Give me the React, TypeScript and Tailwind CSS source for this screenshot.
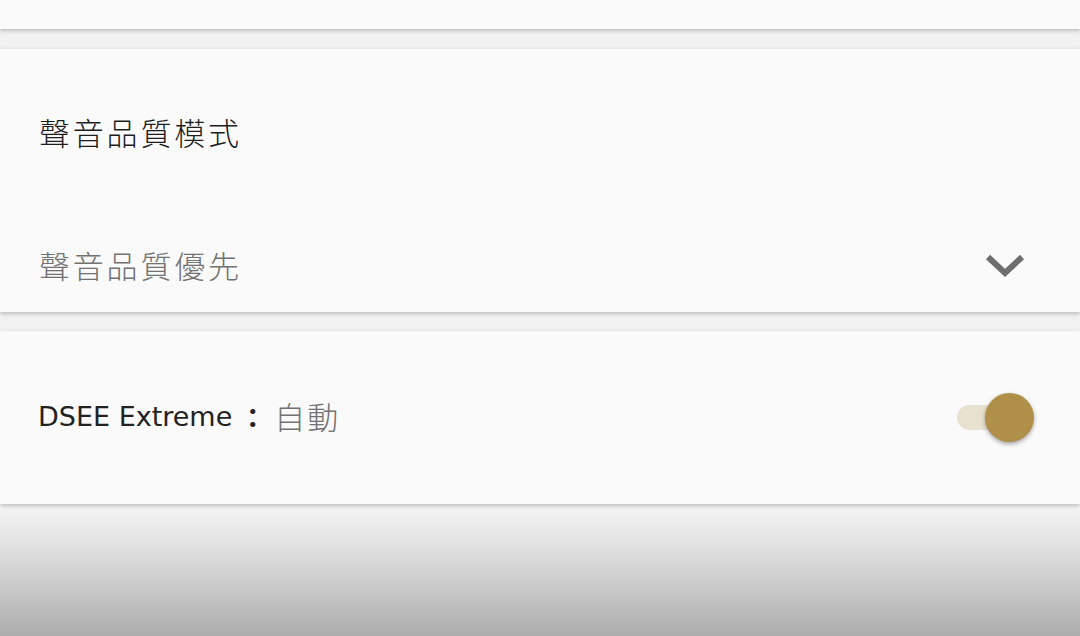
import React from "react";

const cjk = { fontFamily: '"Noto Sans CJK TC", "Noto Sans", sans-serif' };

export default function App() {
  return (
    <div
      className="w-[1080px] h-[636px] overflow-hidden bg-[#f2f2f2] flex flex-col"
      style={{ fontFamily: '"Noto Sans", "Noto Sans CJK TC", sans-serif' }}
    >
      {/* top card remnant */}
      <div className="h-[29px] shrink-0 bg-[#fafafa] shadow-[0_2px_4px_rgba(0,0,0,0.22)] relative z-10" />
      <div className="h-[19px] shrink-0" />

      {/* sound quality mode card */}
      <div className="h-[264px] shrink-0 bg-[#fafafa] border-t border-[#e9e9e9] shadow-[0_2px_4px_rgba(0,0,0,0.22)] relative z-10 flex flex-col pl-[39px] pr-[55px]">
        <div className="mt-[61px] h-[44px] flex items-center text-[31px] font-light tracking-[2.8px] text-[#1e1e1e]" style={cjk}>
          聲音品質模式
        </div>
        <div className="mt-[89px] h-[44px] flex items-center justify-between">
          <span className="text-[31px] font-light tracking-[2.8px] text-[#727272]" style={cjk}>
            聲音品質優先
          </span>
          <svg width="40" height="26" viewBox="0 0 40 26" className="mt-[1px]">
            <path d="M3 4 L20 20 L37 4" fill="none" stroke="#6e6e6e" strokeWidth="6" />
          </svg>
        </div>
      </div>
      <div className="h-[18px] shrink-0" />

      {/* DSEE card */}
      <div className="h-[174px] shrink-0 bg-[#fafafa] border-t border-[#e9e9e9] shadow-[0_2px_4px_rgba(0,0,0,0.22)] relative z-10 flex items-center justify-between pl-[38px] pr-[46px]">
        <div className="flex items-center">
          <span className="text-[27px] text-[#222]" style={{ fontFamily: '"DejaVu Sans", sans-serif' }}>
            DSEE Extreme
          </span>
          <span className="ml-[7px] text-[27px] text-[#222] font-bold" style={cjk}>：</span>
          <span className="ml-[8px] -mt-[3px] text-[#727272] text-[31px] font-light tracking-[2px]" style={cjk}>
            自動
          </span>
        </div>
        <div className="relative w-[77px] h-[50px] flex items-center">
          <div className="w-[60px] h-[25px] rounded-full bg-[#e8e1cf]" />
          <div className="absolute right-0 top-0 w-[49px] h-[49px] rounded-full bg-[#b08f49] shadow-[0_2px_4px_rgba(0,0,0,0.35)]" />
        </div>
      </div>

      {/* bottom fade */}
      <div className="flex-1 bg-[linear-gradient(to_bottom,#f4f4f4_0%,#e6e6e6_25%,#c8c8c8_65%,#adadad_100%)]" />
    </div>
  );
}
